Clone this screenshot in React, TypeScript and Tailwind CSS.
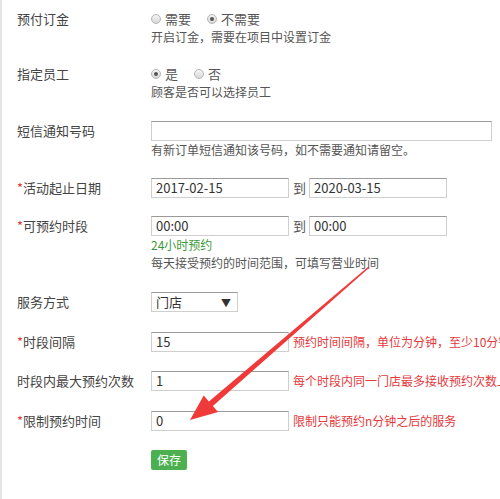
import React from "react";

const font = {
  fontFamily: '"Noto Sans CJK SC", "Liberation Sans", sans-serif',
};

function Radio({ checked, label }: { checked?: boolean; label: string }) {
  return (
    <span className="flex items-center">
      <span className="relative w-[10px] h-[10px] rounded-full border border-[#b5b5b5] bg-gradient-to-b from-[#f4f4f4] to-[#d8d8d8] flex items-center justify-center">
        {checked && <span className="w-[4px] h-[4px] rounded-full bg-[#555]" />}
      </span>
      <span className="ml-[4px] text-[13px] text-[#555]">{label}</span>
    </span>
  );
}

function Label({ text, required }: { text: string; required?: boolean }) {
  return (
    <div className="w-[134px] shrink-0 text-[13px] text-[#444] leading-5">
      {required && <span className="text-[#e4393c]">*</span>}
      {text}
    </div>
  );
}

function Input({ value, width }: { value?: string; width: string }) {
  return (
    <div
      className={`${width} shrink-0 h-5 border border-[#cfcfcf] border-t-[#9a9a9a] bg-white px-[4px] text-[13px] leading-[18px] text-[#333]`}
    >
      {value}
    </div>
  );
}

function Hint({ text, color = "text-[#555]" }: { text: string; color?: string }) {
  return <div className={`text-[12px] leading-[18px] ${color}`}>{text}</div>;
}

export default function App() {
  return (
    <div
      className="relative w-[500px] h-[499px] bg-white border-l-2 border-[#e5e5e5] overflow-hidden"
      style={font}
    >
      <div className="pl-[15px] pt-[10px]">
        {/* 预付订金 */}
        <div className="flex">
          <div className="w-[134px] shrink-0 text-[13px] text-[#444] leading-[18px]">预付订金</div>
          <div>
            <div className="flex h-[18px] items-center gap-[16px]">
              <Radio label="需要" />
              <Radio checked label="不需要" />
            </div>
            <Hint text="开启订金，需要在项目中设置订金" />
          </div>
        </div>

        {/* 指定员工 */}
        <div className="flex mt-[19px]">
          <div className="w-[134px] shrink-0 text-[13px] text-[#444] leading-[18px]">指定员工</div>
          <div>
            <div className="flex h-[18px] items-center gap-[16px]">
              <Radio checked label="是" />
              <Radio label="否" />
            </div>
            <Hint text="顾客是否可以选择员工" />
          </div>
        </div>

        {/* 短信通知号码 */}
        <div className="flex mt-[20px]">
          <Label text="短信通知号码" />
          <div>
            <Input width="w-[341px]" />
            <Hint text="有新订单短信通知该号码，如不需要通知请留空。" />
          </div>
        </div>

        {/* 活动起止日期 */}
        <div className="flex mt-[19px]">
          <Label text="活动起止日期" required />
          <div className="flex items-center">
            <Input width="w-[138px]" value="2017-02-15" />
            <span className="ml-[4px] mr-[3px] text-[13px] text-[#555]">到</span>
            <Input width="w-[138px]" value="2020-03-15" />
          </div>
        </div>

        {/* 可预约时段 */}
        <div className="flex mt-[18px]">
          <Label text="可预约时段" required />
          <div>
            <div className="flex items-center">
              <Input width="w-[138px]" value="00:00" />
              <span className="ml-[4px] mr-[3px] text-[13px] text-[#555]">到</span>
              <Input width="w-[138px]" value="00:00" />
            </div>
            <Hint text="24小时预约" color="text-[#3a9a3a]" />
            <Hint text="每天接受预约的时间范围，可填写营业时间" />
          </div>
        </div>

        {/* 服务方式 */}
        <div className="flex mt-[20px]">
          <Label text="服务方式" />
          <div className="w-[87px] h-5 border border-[#cfcfcf] border-t-[#9a9a9a] flex items-center justify-between pl-[4px] pr-[6px] text-[13px] text-[#333]">
            <span>门店</span>
            <span className="text-[10px] text-[#333]">▼</span>
          </div>
        </div>

        {/* 时段间隔 */}
        <div className="flex mt-[20px] items-center">
          <Label text="时段间隔" required />
          <Input width="w-[138px]" value="15" />
          <span className="ml-[4px] text-[12px] text-[#e4393c] whitespace-nowrap">
            预约时间间隔，单位为分钟，至少10分钟
          </span>
        </div>

        {/* 时段内最大预约次数 */}
        <div className="flex mt-[19px] items-center">
          <Label text="时段内最大预约次数" />
          <Input width="w-[138px]" value="1" />
          <span className="ml-[4px] text-[12px] text-[#e4393c] whitespace-nowrap">
            每个时段内同一门店最多接收预约次数上限
          </span>
        </div>

        {/* 限制预约时间 */}
        <div className="flex mt-[20px] items-center">
          <Label text="限制预约时间" required />
          <Input width="w-[138px]" value="0" />
          <span className="ml-[4px] text-[12px] text-[#e4393c] whitespace-nowrap">
            限制只能预约n分钟之后的服务
          </span>
        </div>

        <div className="flex mt-[19px]">
          <div className="w-[134px] shrink-0" />
          <button className="w-[36px] h-5 rounded-[2px] bg-[#4caf50] text-white text-[12px] leading-5">
            保存
          </button>
        </div>
      </div>

      {/* annotation arrow */}
      <svg className="absolute left-0 top-0 pointer-events-none" width="500" height="499" viewBox="0 0 500 499">
        <polygon
          points="188,420 216.1,412 210.9,406 367.5,267.5 366.5,266.5 206.9,401.4 201.7,395.4"
          fill="#f03a3a"
        />
      </svg>
    </div>
  );
}
